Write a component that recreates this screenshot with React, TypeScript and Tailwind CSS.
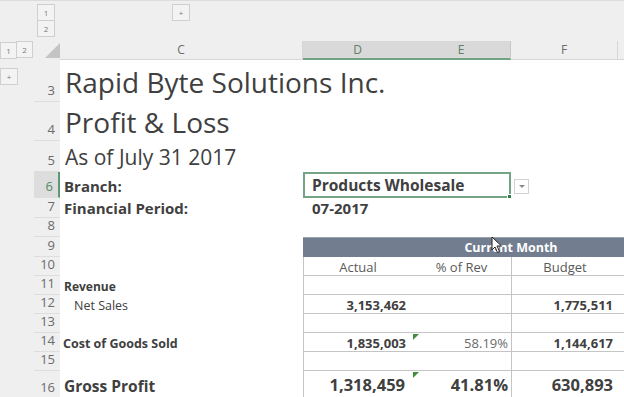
import React from 'react';

const font = { fontFamily: '"Open Sans", "Liberation Sans", sans-serif' };

function OutlineBtn({ label, className = '' }: { label: string; className?: string }) {
  return (
    <div
      className={`w-[18px] h-[17px] flex items-center justify-center border border-[#cfcfcf] bg-[#f3f3f3] text-[8px] text-[#7a7a7a] ${className}`}
    >
      {label}
    </div>
  );
}

function Gutter({ n, sel, children }: { n: number; sel?: boolean; children?: React.ReactNode }) {
  return (
    <div className="w-[60px] shrink-0 flex bg-[#efefef]">
      <div className="w-[34px] shrink-0">{children}</div>
      <div
        className={`w-[26px] flex items-end justify-end pr-[5px] pb-[1px] text-[13px] border-b border-[#dedede] ${
          sel ? 'bg-[#dddddd] text-[#4f8a64] border-r-2 border-r-[#5d9a72]' : 'text-[#6b6b6b]'
        }`}
      >
        {n}
      </div>
    </div>
  );
}

function ErrMark() {
  return (
    <div className="absolute left-[1px] top-[1px] w-0 h-0 border-t-[6px] border-t-[#3f8f3f] border-r-[6px] border-r-transparent" />
  );
}

export default function App() {
  const txt = 'text-[#404040]';
  return (
    <div className="w-[624px] h-[397px] overflow-hidden bg-white relative" style={font}>
      {/* outline bar */}
      <div className="h-[41px] bg-[#efefef] border-t border-[#dcdcdc] flex">
        <div className="w-[37px] shrink-0" />
        <div className="flex flex-col pt-[3px]">
          <OutlineBtn label="1" />
          <OutlineBtn label="2" className="-mt-px" />
        </div>
        <div className="w-[117px] shrink-0" />
        <OutlineBtn label="+" className="mt-[3px]" />
      </div>

      {/* column headers */}
      <div className="h-[19px] flex bg-[#efefef] text-[12px] text-[#6b6b6b]">
        <div className="w-[60px] shrink-0 flex items-start">
          <OutlineBtn label="1" className="w-[14px] mt-px" />
          <OutlineBtn label="2" className="-ml-px" />
          <div className="ml-[12px] mt-[2px] w-0 h-0 border-b-[15px] border-b-[#c4c4c4] border-l-[15px] border-l-transparent" />
        </div>
        <div className="w-[243px] shrink-0 flex items-center justify-center border-r border-[#d6d6d6] border-b border-b-[#d6d6d6]">C</div>
        <div className="w-[109px] shrink-0 flex items-center justify-center bg-[#d9d9d9] border-b-2 border-[#6fa383] text-[#5f7f6b]">D</div>
        <div className="w-[99px] shrink-0 flex items-center justify-center bg-[#d9d9d9] border-b-2 border-[#6fa383] border-r border-r-[#c8c8c8] text-[#5f7f6b]">E</div>
        <div className="w-[107px] shrink-0 flex items-center justify-center border-r border-[#d6d6d6] border-b border-b-[#d6d6d6]">F</div>
        <div className="flex-1 border-b border-[#d6d6d6]" />
      </div>

      {/* row 3 */}
      <div className="h-[42px] flex">
        <Gutter n={3}>
          <OutlineBtn label="+" className="w-[14px] mt-[8px]" />
        </Gutter>
        <div className={`flex items-end pl-[5px] pb-[6px] whitespace-nowrap text-[28px] leading-none ${txt}`}>
          Rapid Byte Solutions Inc.
        </div>
      </div>

      {/* row 4 */}
      <div className="h-[39px] flex">
        <Gutter n={4} />
        <div className={`flex items-end pl-[5px] pb-[5px] whitespace-nowrap text-[28px] leading-none ${txt}`}>
          Profit &amp; Loss
        </div>
      </div>

      {/* row 5 */}
      <div className="h-[31px] flex">
        <Gutter n={5} />
        <div className={`flex items-end pl-[5px] pb-[4px] whitespace-nowrap text-[21px] leading-none ${txt}`}>
          As of July 31 2017
        </div>
      </div>

      {/* row 6 */}
      <div className="h-[26px] flex">
        <Gutter n={6} sel />
        <div className={`w-[243px] shrink-0 flex items-center pl-[4px] pt-[3px] text-[15px] font-bold ${txt}`}>Branch:</div>
        <div className={`w-[208px] shrink-0 relative flex items-center pl-[7px] pt-[1px] border-2 border-[#72a485] text-[15.5px] font-bold ${txt}`}>
          Products Wholesale
          <div className="absolute -right-[3px] -bottom-[3px] w-[5px] h-[5px] bg-[#2f7d4b] border border-white" />
        </div>
        <div className="flex-1 flex items-center pl-[3px] pt-[3px]">
          <div className="w-[15px] h-[15px] border border-[#d2d2d2] bg-white flex items-center justify-center">
            <div className="w-0 h-0 border-t-[3px] border-t-[#8a8a8a] border-x-[3px] border-x-transparent" />
          </div>
        </div>
      </div>

      {/* row 7 */}
      <div className="h-[20px] flex">
        <Gutter n={7} />
        <div className={`w-[243px] shrink-0 flex items-end pl-[4px] text-[15px] font-bold leading-[20px] ${txt}`}>Financial Period:</div>
        <div className={`flex items-end pl-[9px] text-[15px] font-bold leading-[20px] ${txt}`}>07-2017</div>
      </div>

      {/* row 8 */}
      <div className="h-[19px] flex">
        <Gutter n={8} />
      </div>

      {/* row 9 */}
      <div className="h-[20px] flex">
        <Gutter n={9} />
        <div className="w-[243px] shrink-0" />
        <div className="flex-1 bg-[#727d8f] border-t border-[#9aa2ae] flex items-center justify-center pl-[95px] pt-px text-[12.5px] font-bold text-white">
          Current Month
        </div>
      </div>

      <TableRow n={10} h={19}
        d={<span className="w-full text-center text-[13px] text-[#595959]">Actual</span>}
        e={<span className="w-full text-center text-[13px] text-[#595959]">% of Rev</span>}
        f={<span className="w-full text-center text-[13px] text-[#595959]">Budget</span>}
      />
      <TableRow n={11} h={19}
        c={<span className={`pl-[4px] text-[12px] font-bold ${txt}`}>Revenue</span>}
      />
      <TableRow n={12} h={19}
        c={<span className={`pl-[14px] text-[12.5px] ${txt}`}>Net Sales</span>}
        d={<span className={`w-full text-right pr-[6px] text-[13px] font-bold ${txt}`}>3,153,462</span>}
        f={<span className={`w-full text-right pr-[5px] text-[13px] font-bold ${txt}`}>1,775,511</span>}
      />
      <TableRow n={13} h={19} />
      <TableRow n={14} h={19} err
        c={<span className={`pl-[3px] text-[12.5px] font-bold ${txt}`}>Cost of Goods Sold</span>}
        d={<span className={`w-full text-right pr-[6px] text-[13px] font-bold ${txt}`}>1,835,003</span>}
        e={<span className="w-full text-right pr-[3px] text-[13px] text-[#6a6a6a]">58.19%</span>}
        f={<span className={`w-full text-right pr-[5px] text-[13px] font-bold ${txt}`}>1,144,617</span>}
      />
      <TableRow n={15} h={19} />
      <TableRow n={16} h={28} last err
        c={<span className={`pl-[4px] text-[15.5px] font-bold ${txt}`}>Gross Profit</span>}
        d={<span className={`w-full text-right pr-[7px] text-[16.5px] font-bold ${txt}`}>1,318,459</span>}
        e={<span className={`w-full text-right pr-[3px] text-[16.5px] font-bold ${txt}`}>41.81%</span>}
        f={<span className={`w-full text-right pr-[5px] text-[16.5px] font-bold ${txt}`}>630,893</span>}
      />

      {/* mouse pointer */}
      <svg className="absolute left-[491px] top-[236px]" width="12" height="18" viewBox="0 0 12 18">
        <path d="M1 1 L1 14 L4 11 L6.5 16.5 L8.5 15.5 L6 10 L10.5 10 Z" fill="white" stroke="#222" strokeWidth="1" strokeLinejoin="round" />
      </svg>
    </div>
  );
}

function TableRow({
  n, h, c, d, e, f, err, last,
}: {
  n: number; h: number; c?: React.ReactNode; d?: React.ReactNode; e?: React.ReactNode; f?: React.ReactNode; err?: boolean; last?: boolean;
}) {
  const b = last ? '' : 'border-b border-[#c4c4c4]';
  const cell = last ? 'items-end pb-[1px]' : 'items-center pt-[3px]';
  return (
    <div className="flex" style={{ height: h }}>
      <Gutter n={n} />
      <div className={`w-[243px] shrink-0 flex ${cell} whitespace-nowrap`}>{c}</div>
      <div className={`w-[109px] shrink-0 flex ${cell} border-l border-l-[#c4c4c4] ${b}`}>{d}</div>
      <div className={`w-[99px] shrink-0 relative flex ${cell} ${b}`}>
        {err && <ErrMark />}
        {e}
      </div>
      <div className={`w-[107px] shrink-0 flex ${cell} border-l border-l-[#c4c4c4] ${b}`}>{f}</div>
      <div className={`flex-1 ${b}`} />
    </div>
  );
}
